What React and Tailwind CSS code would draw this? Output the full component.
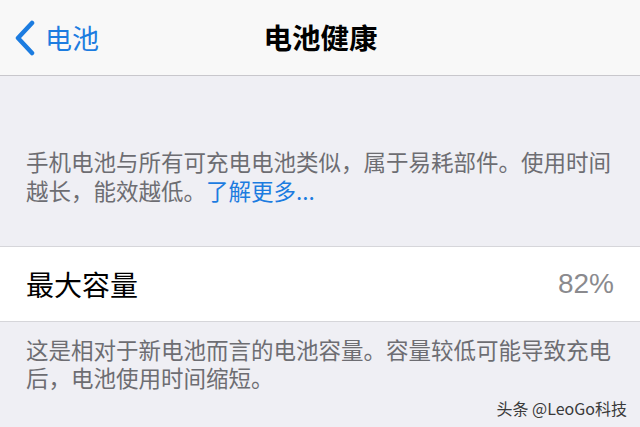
import React from "react";

const cjk = { fontFamily: '"Noto Sans CJK SC", "Noto Sans", sans-serif' };

export default function App() {
  return (
    <div className="w-[640px] h-[427px] overflow-hidden bg-[#efeff4] flex flex-col" style={cjk}>
      <div className="h-[76px] shrink-0 bg-[#f8f8f8] border-b border-[#c8c7cc] relative flex items-center">
        <div className="flex items-center pl-[14px] gap-[9px] text-[#1c7ce0]">
          <svg width="22" height="36" viewBox="0 0 22 36" className="mt-[1px]">
            <path d="M18 3 L4 18 L18 33" fill="none" stroke="#1c7ce0" strokeWidth="4.5" strokeLinecap="round" strokeLinejoin="round" />
          </svg>
          <span className="text-[27px] leading-none">电池</span>
        </div>
        <div className="absolute left-0 right-0 top-0 bottom-0 flex items-center justify-center pointer-events-none">
          <span className="text-[28.5px] font-bold leading-none text-black ml-[1px]">电池健康</span>
        </div>
      </div>

      <div className="pt-[71px] pb-[41px] pl-[26px] pr-[10px] text-[22.5px] leading-[29px] text-[#6d6d72]">
        手机电池与所有可充电电池类似，属于易耗部件。使用时间
        <br />
        越长，能效越低。<span className="text-[#1c7ce0]">了解更多...</span>
      </div>

      <div className="h-[76px] shrink-0 bg-white border-y border-[#d6d6da] flex items-center justify-between pl-[26px] pr-[26px]">
        <span className="text-[28px] leading-none text-black">最大容量</span>
        <span className="text-[28px] leading-none text-[#8a8a8e]" style={{ fontFamily: '"Liberation Sans", Arial, sans-serif' }}>82%</span>
      </div>

      <div className="pt-[13px] pl-[26px] pr-[10px] text-[22.5px] leading-[28px] text-[#6d6d72]">
        这是相对于新电池而言的电池容量。容量较低可能导致充电
        <br />
        后，电池使用时间缩短。
      </div>

      <div className="flex justify-end pr-[13px] mt-[9px]">
        <span className="text-[16px] leading-none text-[#3a3a3a]">头条 @LeoGo科技</span>
      </div>
    </div>
  );
}
